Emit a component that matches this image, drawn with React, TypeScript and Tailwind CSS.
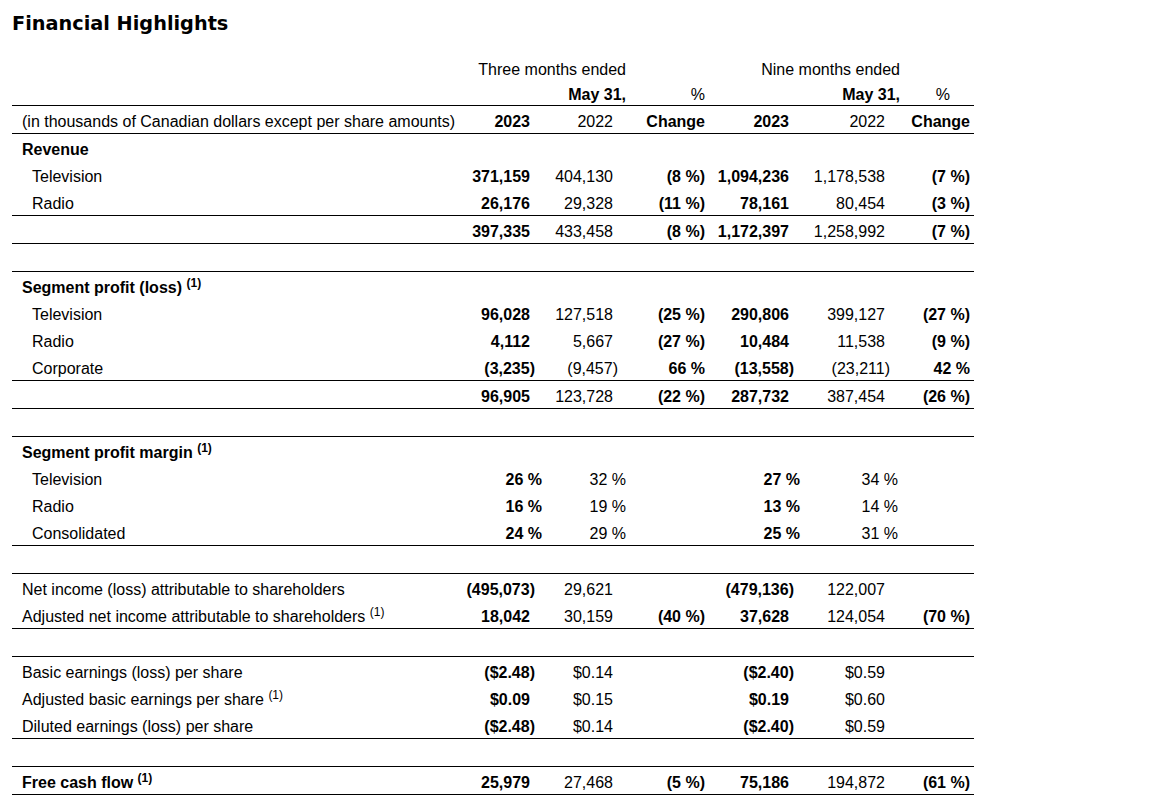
import React from "react"

type Row = {
  label?: string
  kind?: "section" | "item" | "plain" | "blank"
  sup?: boolean
  bold?: boolean
  values?: string[]
  border?: boolean
  margin?: boolean
}

const rows: Row[] = [
  { label: "Revenue", kind: "section" },
  { label: "Television", kind: "item", values: ["371,159", "404,130", "(8 %)", "1,094,236", "1,178,538", "(7 %)"] },
  { label: "Radio", kind: "item", values: ["26,176", "29,328", "(11 %)", "78,161", "80,454", "(3 %)"], border: true },
  { label: "", kind: "plain", values: ["397,335", "433,458", "(8 %)", "1,172,397", "1,258,992", "(7 %)"], border: true },
  { kind: "blank", border: true },
  { label: "Segment profit (loss)", kind: "section", sup: true },
  { label: "Television", kind: "item", values: ["96,028", "127,518", "(25 %)", "290,806", "399,127", "(27 %)"] },
  { label: "Radio", kind: "item", values: ["4,112", "5,667", "(27 %)", "10,484", "11,538", "(9 %)"] },
  { label: "Corporate", kind: "item", values: ["(3,235)", "(9,457)", "66 %", "(13,558)", "(23,211)", "42 %"], border: true },
  { label: "", kind: "plain", values: ["96,905", "123,728", "(22 %)", "287,732", "387,454", "(26 %)"], border: true },
  { kind: "blank", border: true },
  { label: "Segment profit margin", kind: "section", sup: true },
  { label: "Television", kind: "item", margin: true, values: ["26 %", "32 %", "", "27 %", "34 %", ""] },
  { label: "Radio", kind: "item", margin: true, values: ["16 %", "19 %", "", "13 %", "14 %", ""] },
  { label: "Consolidated", kind: "item", margin: true, values: ["24 %", "29 %", "", "25 %", "31 %", ""], border: true },
  { kind: "blank", border: true },
  { label: "Net income (loss) attributable to shareholders", kind: "plain", values: ["(495,073)", "29,621", "", "(479,136)", "122,007", ""] },
  { label: "Adjusted net income attributable to shareholders", kind: "plain", sup: true, values: ["18,042", "30,159", "(40 %)", "37,628", "124,054", "(70 %)"], border: true },
  { kind: "blank", border: true },
  { label: "Basic earnings (loss) per share", kind: "plain", values: ["($2.48)", "$0.14", "", "($2.40)", "$0.59", ""] },
  { label: "Adjusted basic earnings per share", kind: "plain", sup: true, values: ["$0.09", "$0.15", "", "$0.19", "$0.60", ""] },
  { label: "Diluted earnings (loss) per share", kind: "plain", values: ["($2.48)", "$0.14", "", "($2.40)", "$0.59", ""], border: true },
  { kind: "blank", border: true },
  { label: "Free cash flow", kind: "plain", bold: true, sup: true, values: ["25,979", "27,468", "(5 %)", "75,186", "194,872", "(61 %)"], border: true },
]

const grid = "grid grid-cols-[448px_85px_83px_82px_93px_100px_71px] items-center"
const pad = ["pr-[15px]", "pr-[15px]", "pr-[5px]", "pr-[14px]", "pr-[18px]", "pr-[4px]"]
const marginPad = ["pr-[3px]", "pr-[2px]", "pr-[5px]", "pr-[3px]", "pr-[5px]", "pr-[4px]"]
const boldCols = [true, false, true, true, false, true]

function Value({ value, col, margin }: { value: string; col: number; margin?: boolean }) {
  // parentheses hang past the figure column, except in the change columns
  const hangs = value.endsWith(")") && col !== 2 && col !== 5
  return (
    <div className={`text-right whitespace-nowrap ${margin ? marginPad[col] : pad[col]} ${boldCols[col] ? "font-bold" : ""}`}>
      {hangs ? (
        <>
          {value.slice(0, -1)}
          <span className="-mr-[5px]">)</span>
        </>
      ) : (
        value
      )}
    </div>
  )
}

function TableRow({ row }: { row: Row }) {
  const height = row.border ? "h-[28px] border-b border-black" : "h-[27px]"
  if (row.kind === "blank") {
    return <div className={height} />
  }
  const labelClass =
    row.kind === "item"
      ? "pl-[20px]"
      : row.kind === "section"
        ? "pl-[10px] font-bold"
        : `pl-[10px] ${row.bold ? "font-bold" : ""}`
  return (
    <div className={`${grid} ${height} pt-[4px]`}>
      <div className={`whitespace-nowrap ${labelClass}`}>
        {row.label}
        {row.sup && (
          <>
            {" "}
            <sup className="text-[12px]">(1)</sup>
          </>
        )}
      </div>
      {(row.values ?? ["", "", "", "", "", ""]).map((v, i) => (
        <Value key={i} value={v} col={i} margin={row.margin} />
      ))}
    </div>
  )
}

export default function App() {
  return (
    <div className="min-h-screen bg-white px-[12px] pt-[10px] text-black">
      <h2 className="font-['DejaVu_Sans',Verdana,sans-serif] text-[19.3px] font-bold leading-[28px]">
        Financial Highlights
      </h2>

      <div className="mt-[19px] w-[962px] font-['Liberation_Sans',Arial,sans-serif] text-[16px]">
        <div className={`${grid} h-[24px] pt-[1px]`}>
          <div />
          <div className="col-span-2 text-right pr-[2px]">Three months ended</div>
          <div />
          <div className="col-span-2 text-right pr-[3px]">Nine months ended</div>
          <div />
        </div>
        <div className={`${grid} h-[25px] border-b border-black pt-[2px]`}>
          <div />
          <div className="col-span-2 text-right pr-[2px] font-bold">May 31,</div>
          <div className="text-right pr-[5px]">%</div>
          <div className="col-span-2 text-right pr-[3px] font-bold">May 31,</div>
          <div className="text-right pr-[24px]">%</div>
        </div>
        <div className={`${grid} h-[28px] border-b border-black pt-[4px]`}>
          <div className="pl-[10px] whitespace-nowrap">(in thousands of Canadian dollars except per share amounts)</div>
          <div className="text-right pr-[15px] font-bold">2023</div>
          <div className="text-right pr-[15px]">2022</div>
          <div className="text-right pr-[5px] font-bold">Change</div>
          <div className="text-right pr-[14px] font-bold">2023</div>
          <div className="text-right pr-[18px]">2022</div>
          <div className="text-right pr-[4px] font-bold">Change</div>
        </div>

        {rows.map((row, i) => (
          <TableRow key={i} row={row} />
        ))}
      </div>
    </div>
  )
}
